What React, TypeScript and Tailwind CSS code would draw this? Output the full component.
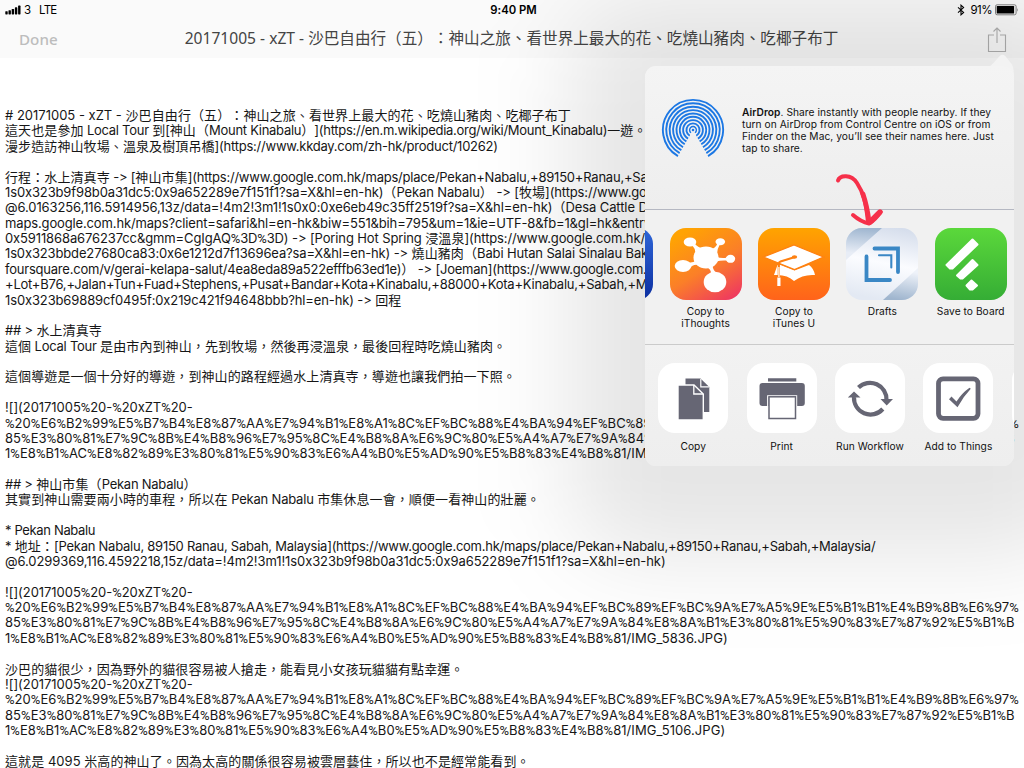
import React from "react";

const imageLines = (name: string): [string, string?][] => [
  ["![](20171005%20-%20xZT%20-", "tracking-[-0.05px]"],
  ["%20%E6%B2%99%E5%B7%B4%E8%87%AA%E7%94%B1%E8%A1%8C%EF%BC%88%E4%BA%94%EF%BC%89%EF%BC%9A%E7%A5%9E%E5%B1%B1%E4%B9%8B%E6%97%", "tracking-[0.05px]"],
  ["85%E3%80%81%E7%9C%8B%E4%B8%96%E7%95%8C%E4%B8%8A%E6%9C%80%E5%A4%A7%E7%9A%84%E8%8A%B1%E3%80%81%E5%90%83%E7%87%92%E5%B1%B", "tracking-[0.06px]"],
  [`1%E8%B1%AC%E8%82%89%E3%80%81%E5%90%83%E6%A4%B0%E5%AD%90%E5%B8%83%E4%B8%81/${name})`, "tracking-[0.05px]"],
];

/* Each entry: text of the line, letter spacing of its Latin runs. */
const LINES: [string, string?][] = [
  ["# 20171005 - xZT - 沙巴自由行（五）：神山之旅、看世界上最大的花、吃燒山豬肉、吃椰子布丁", "tracking-[0px]"],
  ["這天也是參加 Local Tour 到[神山（Mount Kinabalu）](https://en.m.wikipedia.org/wiki/Mount_Kinabalu)一遊。", "tracking-[-0.28px]"],
  ["漫步造訪神山牧場、溫泉及樹頂吊橋](https://www.kkday.com/zh-hk/product/10262)", "tracking-[-0.24px]"],
  [""],
  ["行程：水上清真寺 -> [神山市集](https://www.google.com.hk/maps/place/Pekan+Nabalu,+89150+Ranau,+Sabah,+Malaysia/@6.0299369,116.4592218,15z/data=!4m2!3m1!", "tracking-[-0.22px]"],
  ["1s0x323b9f98b0a31dc5:0x9a652289e7f151f1?sa=X&hl=en-hk)（Pekan Nabalu） -> [牧場](https://www.google.com.hk/maps/place/", "tracking-[-0.13px]"],
  ["@6.0163256,116.5914956,13z/data=!4m2!3m1!1s0x0:0xe6eb49c35ff2519f?sa=X&hl=en-hk)（Desa Cattle Dairy Farm)", "tracking-[-0.1px]"],
  ["maps.google.com.hk/maps?client=safari&hl=en-hk&biw=551&bih=795&um=1&ie=UTF-8&fb=1&gl=hk&entry=", "tracking-[-0.14px]"],
  ["0x5911868a676237cc&gmm=CgIgAQ%3D%3D) -> [Poring Hot Spring 浸溫泉](https://www.google.com.hk/maps/", "tracking-[-0.12px]"],
  ["1s0x323bbde27680ca83:0x6e1212d7f13696ea?sa=X&hl=en-hk) -> 燒山豬肉（Babi Hutan Salai Sinalau Bakas", "tracking-[-0.14px]"],
  ["foursquare.com/v/gerai-kelapa-salut/4ea8eda89a522efffb63ed1e)） -> [Joeman](https://www.google.com.hk/", "tracking-[-0.22px]"],
  ["+Lot+B76,+Jalan+Tun+Fuad+Stephens,+Pusat+Bandar+Kota+Kinabalu,+88000+Kota+Kinabalu,+Sabah,+Malaysia", "tracking-[-0.22px]"],
  ["1s0x323b69889cf0495f:0x219c421f94648bbb?hl=en-hk) -> 回程", "tracking-[-0.13px]"],
  [""],
  ["## > 水上清真寺", "tracking-[-0.2px]"],
  ["這個 Local Tour 是由市內到神山，先到牧場，然後再浸溫泉，最後回程時吃燒山豬肉。", "tracking-[-0.25px]"],
  [""],
  ["這個導遊是一個十分好的導遊，到神山的路程經過水上清真寺，導遊也讓我們拍一下照。"],
  [""],
  ...imageLines("IMG_5835.JPG"),
  [""],
  ["## > 神山市集（Pekan Nabalu）", "tracking-[-0.25px]"],
  ["其實到神山需要兩小時的車程，所以在 Pekan Nabalu 市集休息一會，順便一看神山的壯麗。", "tracking-[-0.2px]"],
  [""],
  ["* Pekan Nabalu", "tracking-[-0.35px]"],
  ["* 地址：[Pekan Nabalu, 89150 Ranau, Sabah, Malaysia](https://www.google.com.hk/maps/place/Pekan+Nabalu,+89150+Ranau,+Sabah,+Malaysia/", "tracking-[-0.25px]"],
  ["@6.0299369,116.4592218,15z/data=!4m2!3m1!1s0x323b9f98b0a31dc5:0x9a652289e7f151f1?sa=X&hl=en-hk)", "tracking-[-0.09px]"],
  [""],
  ...imageLines("IMG_5836.JPG"),
  [""],
  ["沙巴的貓很少，因為野外的貓很容易被人搶走，能看見小女孩玩貓貓有點幸運。"],
  ...imageLines("IMG_5106.JPG"),
  [""],
  ["這就是 4095 米高的神山了。因為太高的關係很容易被雲層藝住，所以也不是經常能看到。"],
];

const CJK = /([\u3000-\u9fff\uff00-\uffef]+)/;

function Latin({ text, tracking }: { text: string; tracking: string }) {
  return (
    <span className={tracking}>
      {text.split(/(%)/).map((part, i) =>
        part === "%" ? (
          <span key={i} className="font-['Roboto',sans-serif]">%</span>
        ) : (
          part
        )
      )}
    </span>
  );
}

function Line({ text, tracking = "tracking-[0px]" }: { text: string; tracking?: string }) {
  return (
    <div className="h-[15.38px] whitespace-pre">
      {text.split(CJK).map((run, i) =>
        i % 2 ? (
          <span key={i} className="tracking-[0.1px]">{run}</span>
        ) : (
          <Latin key={i} text={run} tracking={tracking} />
        )
      )}
    </div>
  );
}

function StatusBar() {
  return (
    <div className="grid h-5 grid-cols-3 items-center text-[12px] leading-5 text-black">
      <div className="flex items-center pl-[5px]">
        <svg width="17" height="10" viewBox="0 0 17 10">
          <rect x="0.3" y="6.2" width="2.4" height="3.2" rx="0.6" />
          <rect x="3.5" y="5.2" width="2.4" height="4.2" rx="0.6" />
          <rect x="6.7" y="3.9" width="2.4" height="5.5" rx="0.6" />
          <rect x="9.9" y="2.3" width="2.4" height="7.1" rx="0.6" />
          <rect x="13.1" y="0.6" width="2.4" height="8.8" rx="0.6" />
        </svg>
        <span className="ml-[2px] text-[11.5px]">3</span>
        <span className="ml-2 text-[11.5px] tracking-[-0.8px]">LTE</span>
      </div>
      <div className="pl-[3px] text-center text-[11.3px] font-semibold">9:40 PM</div>
      <div className="flex items-center justify-end pr-[5px]">
        <svg width="8" height="12" viewBox="0 0 8 12" fill="none" stroke="#000" strokeWidth="1.1">
          <path d="M1 3.4 6.6 8.4 4 10.8V1.2L6.6 3.6 1 8.6" />
        </svg>
        <span className="ml-[5px] text-[11.5px] tracking-[-0.5px]">91%</span>
        <svg className="ml-[3px]" width="24" height="12" viewBox="0 0 24 12">
          <rect x="0.5" y="0.8" width="20.6" height="10" rx="1.6" fill="none" stroke="#666" strokeWidth="0.8" />
          <rect x="1.7" y="2" width="17.4" height="7.6" rx="0.6" />
          <path d="M22.2 3.9q1.5 1.9 0 3.8z" fill="#777" />
        </svg>
      </div>
    </div>
  );
}

function AirDropIcon() {
  return (
    <svg width="64" height="64" viewBox="-32 -32 64 64" fill="none" stroke="#1d78e4" strokeWidth="1.9">
      {[6.6, 9.9, 13.2, 16.5, 19.9, 23.3, 26.7, 30.1].map((r) => (
        <path key={r} d={`M${r * 0.5} ${r * 0.866}A${r} ${r} 0 1 0 ${-r * 0.5} ${r * 0.866}`} />
      ))}
      <path d="M2 2.700A3.400 3.400 0 1 0 -2 2.700" strokeWidth="1.400" />
      <circle r="1.300" fill="#1d78e4" stroke="none" />
    </svg>
  );
}

function BlueApp() {
  return (
    <svg viewBox="0 0 72 72">
      <defs>
        <linearGradient id="blu" x1="0" y1="0" x2="0" y2="1">
          <stop offset="0" stopColor="#2f66d8" />
          <stop offset="1" stopColor="#0c2fa0" />
        </linearGradient>
      </defs>
      <rect width="72" height="72" rx="16" fill="url(#blu)" />
    </svg>
  );
}

function IThoughts() {
  return (
    <svg viewBox="0 0 72 72">
      <defs>
        <linearGradient id="ith" x1="0.3" y1="0" x2="0.9" y2="1">
          <stop offset="0" stopColor="#ffa303" />
          <stop offset="0.5" stopColor="#fb7f28" />
          <stop offset="1" stopColor="#ee3563" />
        </linearGradient>
      </defs>
      <rect width="72" height="72" rx="16" fill="url(#ith)" />
      <g fill="#fff">
        <ellipse cx="36" cy="29.5" rx="12.5" ry="11" />
        <ellipse cx="20" cy="14" rx="6.300" ry="4.500" />
        <ellipse cx="50.300" cy="13.700" rx="4.800" ry="3.500" />
        <ellipse cx="60.500" cy="30.800" rx="4.700" ry="4" />
        <ellipse cx="13" cy="38" rx="8.300" ry="6" />
        <ellipse cx="45" cy="54" rx="11.300" ry="10.300" />
        <path d="M22 17Q25 20 25.500 25L31 20Q26 18 24.500 15zM42 21Q46.500 19 47.500 15L50 16Q47.500 20 47 26zM46 28.500Q52 31 57 29.500V32.500Q51 32 46 33.500zM18 34Q22 35.500 26 32.500L28 37Q23 36 19 41zM36 39Q41.500 41 41 46L47 45Q43 43 42.500 37z" />
      </g>
    </svg>
  );
}

function ITunesU() {
  return (
    <svg viewBox="0 0 72 72">
      <defs>
        <linearGradient id="itu" x1="0" y1="0" x2="0" y2="1">
          <stop offset="0" stopColor="#ffa400" />
          <stop offset="1" stopColor="#ff631b" />
        </linearGradient>
      </defs>
      <rect width="72" height="72" rx="16" fill="url(#itu)" />
      <path d="M22.500 37 36.500 42.500 51 37Q55.500 40 57 47 45 46 36 53 29 46 16 47 18 41 19.500 37z" fill="#fff" />
      <path d="M36 17 65.500 29 36.500 41.500 5.500 29z" fill="#fff" stroke="#fe8010" strokeWidth="1.200" />
      <path d="M37 29 22.500 33.500Q20.800 34 20.800 36V49" fill="none" stroke="#fe8010" strokeWidth="2.200" />
      <ellipse cx="36.500" cy="29" rx="2.700" ry="1.800" fill="#fe8010" />
      <path d="M20.900 39V49" stroke="#fff" strokeWidth="1.200" />
      <path d="M19.300 49.500h3.200v8.500h-3.200z" fill="#fff" />
    </svg>
  );
}

function Drafts() {
  return (
    <svg viewBox="0 0 72 72">
      <defs>
        <linearGradient id="dra" x1="0.7" y1="0" x2="0.5" y2="1">
          <stop offset="0" stopColor="#d6deec" />
          <stop offset="0.5" stopColor="#fbfcff" />
          <stop offset="1" stopColor="#e3e9f3" />
        </linearGradient>
        <linearGradient id="drb" x1="0.5" y1="0" x2="0.4" y2="1">
          <stop offset="0" stopColor="#9fb6d0" />
          <stop offset="0.8" stopColor="#e8edf6" />
        </linearGradient>
        <linearGradient id="drc" x1="0.7" y1="0" x2="0.5" y2="1">
          <stop offset="0.1" stopColor="#eef2f9" />
          <stop offset="1" stopColor="#9fb5ce" />
        </linearGradient>
        <clipPath id="drclip"><rect width="72" height="72" rx="16" /></clipPath>
      </defs>
      <g clipPath="url(#drclip)">
        <rect width="72" height="72" fill="url(#dra)" />
        <path d="M0 0H36L0 32z" fill="url(#drb)" />
        <path d="M72 40V72H37z" fill="url(#drc)" />
      </g>
      <g fill="none" stroke="#3a87c5" strokeLinecap="round">
        <path d="M28.500 20.500H52V44" strokeWidth="3.800" />
        <path d="M20.500 28.500V52H44" strokeWidth="3.800" />
        <path d="M33 27.300H45.300V39.500" strokeWidth="2.100" />
      </g>
    </svg>
  );
}

function Board() {
  return (
    <svg viewBox="0 0 72 72">
      <defs>
        <linearGradient id="brd" x1="0" y1="0" x2="0" y2="1">
          <stop offset="0" stopColor="#5bd83b" />
          <stop offset="1" stopColor="#35ad35" />
        </linearGradient>
      </defs>
      <rect width="72" height="72" rx="16" fill="url(#brd)" />
      <g fill="#fff" stroke="#fff" strokeWidth="2" strokeLinejoin="round">
        <path d="M37.500 11.500 42.500 16.500 17.500 40.500H15L11.500 37z" />
        <path d="M37.500 32 42.500 37 27.500 50.500H25.500L22 47.500z" />
        <path d="M36.500 52.500 42 57.500 37.500 61.500H35L31.500 57.500z" />
      </g>
    </svg>
  );
}

function CopyIcon() {
  return (
    <svg viewBox="0 0 70 70" fill="#666674">
      <path d="M27.500 15.500H42.500L51.300 24V49H27.500z" />
      <path d="M42.800 16V23.800H51" fill="none" stroke="#fff" strokeWidth="1.200" />
      <path d="M20 22H36L45.300 31V57H20z" stroke="#fff" strokeWidth="1.400" />
      <path d="M35.800 22V31H45" fill="none" stroke="#fff" strokeWidth="1.300" />
    </svg>
  );
}

function PrintIcon() {
  return (
    <svg viewBox="0 0 70 70" fill="#666674">
      <path d="M21 15.200H49.300V18.500H21z" />
      <rect x="12.500" y="20" width="45.300" height="23" rx="3" />
      <path d="M20.800 43V33H49.500V43" fill="none" stroke="#fff" strokeWidth="1.400" />
      <rect x="22" y="33.800" width="26.500" height="21.700" fill="#fff" stroke="#666674" strokeWidth="1.500" />
    </svg>
  );
}

function WorkflowIcon() {
  return (
    <svg viewBox="0 0 70 70">
      <g fill="none" stroke="#666674" strokeWidth="4.200">
        <path d="M23.500 24.500A16.500 16.500 0 0 1 51.500 37" />
        <path d="M47.800 46A16.500 16.500 0 0 1 19 34" />
      </g>
      <path d="M45.500 36H58L51.700 42.500zM12.800 34.500H25.500L19 28.500z" fill="#666674" />
    </svg>
  );
}

function ThingsIcon() {
  return (
    <svg viewBox="0 0 70 70">
      <rect x="15.500" y="15.800" width="39.500" height="39.500" rx="4.500" fill="none" stroke="#666674" strokeWidth="4.800" />
      <path d="M26 36.300 28.500 33.500 33.500 38.500Q39 30 46.500 24.800L47.800 25.800Q40 34 34.500 44.200z" fill="#666674" />
    </svg>
  );
}

const APPS = [
  { label: "", icon: <BlueApp /> },
  { label: "Copy to\niThoughts", icon: <IThoughts /> },
  { label: "Copy to\niTunes U", icon: <ITunesU /> },
  { label: "Drafts", icon: <Drafts /> },
  { label: "Save to Board", icon: <Board /> },
];

const ACTIONS = [
  { label: "Copy", icon: <CopyIcon /> },
  { label: "Print", icon: <PrintIcon /> },
  { label: "Run Workflow", icon: <WorkflowIcon /> },
  { label: "Add to Things", icon: <ThingsIcon /> },
  { label: "", icon: null },
];

function SharePopover() {
  return (
    <div className="absolute top-[66px] left-[645px] h-[400px] w-[369px]">
      <div className="absolute -top-[60px] -right-[70px] -bottom-[90px] -left-[75px] rounded-[60px] bg-black/10 blur-[48px]" />
      <svg className="absolute -top-[12px] right-0" width="26" height="24" viewBox="0 0 26 24">
        <path d="M0 12.500Q3 12 5 9.500L12 1.800Q14.500 -0.500 17 1.800L24 10.500Q26 14 26 24H0z" fill="#f3f3f3" />
      </svg>
      <div className="relative flex h-full flex-col overflow-hidden rounded-[11px] bg-[#f1f1f1] text-[10.2px] leading-[12px] tracking-[0.05px] text-[#111]">
        <div className="flex h-[143px] shrink-0 bg-linear-to-b from-[#f4f4f4] to-[#eeeeee] pt-[32px] pl-[16px]">
          <AirDropIcon />
          <p className="mt-[8px] ml-[17px] whitespace-pre tracking-[0.06px]">
            <b className="font-semibold">AirDrop</b>
            {". Share instantly with people nearby. If they\nturn on AirDrop from Control Centre on iOS or from\nFinder on the Mac, you’ll see their names here. Just\ntap to share."}
          </p>
        </div>
        <div className="h-px shrink-0 bg-[#b5b8c2]" />
        <div className="flex h-[134px] shrink-0 bg-[#f1f1f1] pt-[17.500px]">
          {APPS.map((a, i) => (
            <div key={i} className="flex w-[88.4px] shrink-0 flex-col items-center first:-ml-[72px]">
              <div className="size-[72px]">{a.icon}</div>
              <div className="mt-[5px] text-center whitespace-pre">{a.label}</div>
            </div>
          ))}
        </div>
        <div className="h-px shrink-0 bg-[#cbcbcb]" />
        <div className="flex grow bg-linear-to-b from-[#f2f2f2] to-[#eeeeee] pt-[18px] pl-[4px]">
          {ACTIONS.map((a, i) => (
            <div key={i} className="flex w-[88.4px] shrink-0 flex-col items-center">
              <div className="size-[70px] rounded-[17px] bg-white">{a.icon}</div>
              <div className="mt-[7px] text-center whitespace-pre">{a.label}</div>
            </div>
          ))}
        </div>
      </div>
      <svg className="absolute top-[104px] left-[187px]" width="60" height="60" viewBox="0 0 60 60" fill="none" stroke="#f6304a" strokeLinecap="round" strokeLinejoin="round">
        <path d="M6 10.500C8 5 19 4 25 13C31 22 34 32 36 52" strokeWidth="4" />
        <path d="M31 24Q35 36 37 51" strokeWidth="4.800" />
        <path d="M21 45Q29 52 37 53.500Q43 50 48.500 42" strokeWidth="4" />
        <path d="M38 52 48 42" strokeWidth="5.400" />
      </svg>
    </div>
  );
}

export default function App() {
  return (
    <div className="relative h-[768px] w-[1024px] overflow-hidden bg-white font-['Inter','Noto_Sans_CJK_TC',sans-serif] [font-feature-settings:'calt'_0] [text-spacing-trim:space-all]">
      <header className="h-[58px] bg-[#fafafa]">
        <StatusBar />
        <div className="flex h-[38px] items-center font-['Noto_Sans','Noto_Sans_CJK_TC',sans-serif]">
          <span className="w-[165px] pl-[19px] text-[15.2px] font-medium text-[#bdbdbd]">Done</span>
          <h1 className="w-[693px] text-center text-[15.6px] font-normal whitespace-pre text-[#444]">
            20171005 - xZT - 沙巴自由行（五）：神山之旅、看世界上最大的花、吃燒山豬肉、吃椰子布丁
          </h1>
          <svg className="mt-px ml-[129px]" width="20" height="26" viewBox="0 0 20 26" fill="none" stroke="#b0b0b0" strokeWidth="1.100">
            <path d="M7 8H1.500V24.500H18.500V8H13M10 16V1M6.500 4.500 10 1 13.500 4.500" />
          </svg>
        </div>
      </header>
      <main className="pt-[50px] pl-[5px] text-[13px] leading-[15.38px] text-[#161616]">
        {LINES.map(([text, tracking], i) => (
          <Line key={i} text={text} tracking={tracking} />
        ))}
      </main>
      <SharePopover />
    </div>
  );
}
